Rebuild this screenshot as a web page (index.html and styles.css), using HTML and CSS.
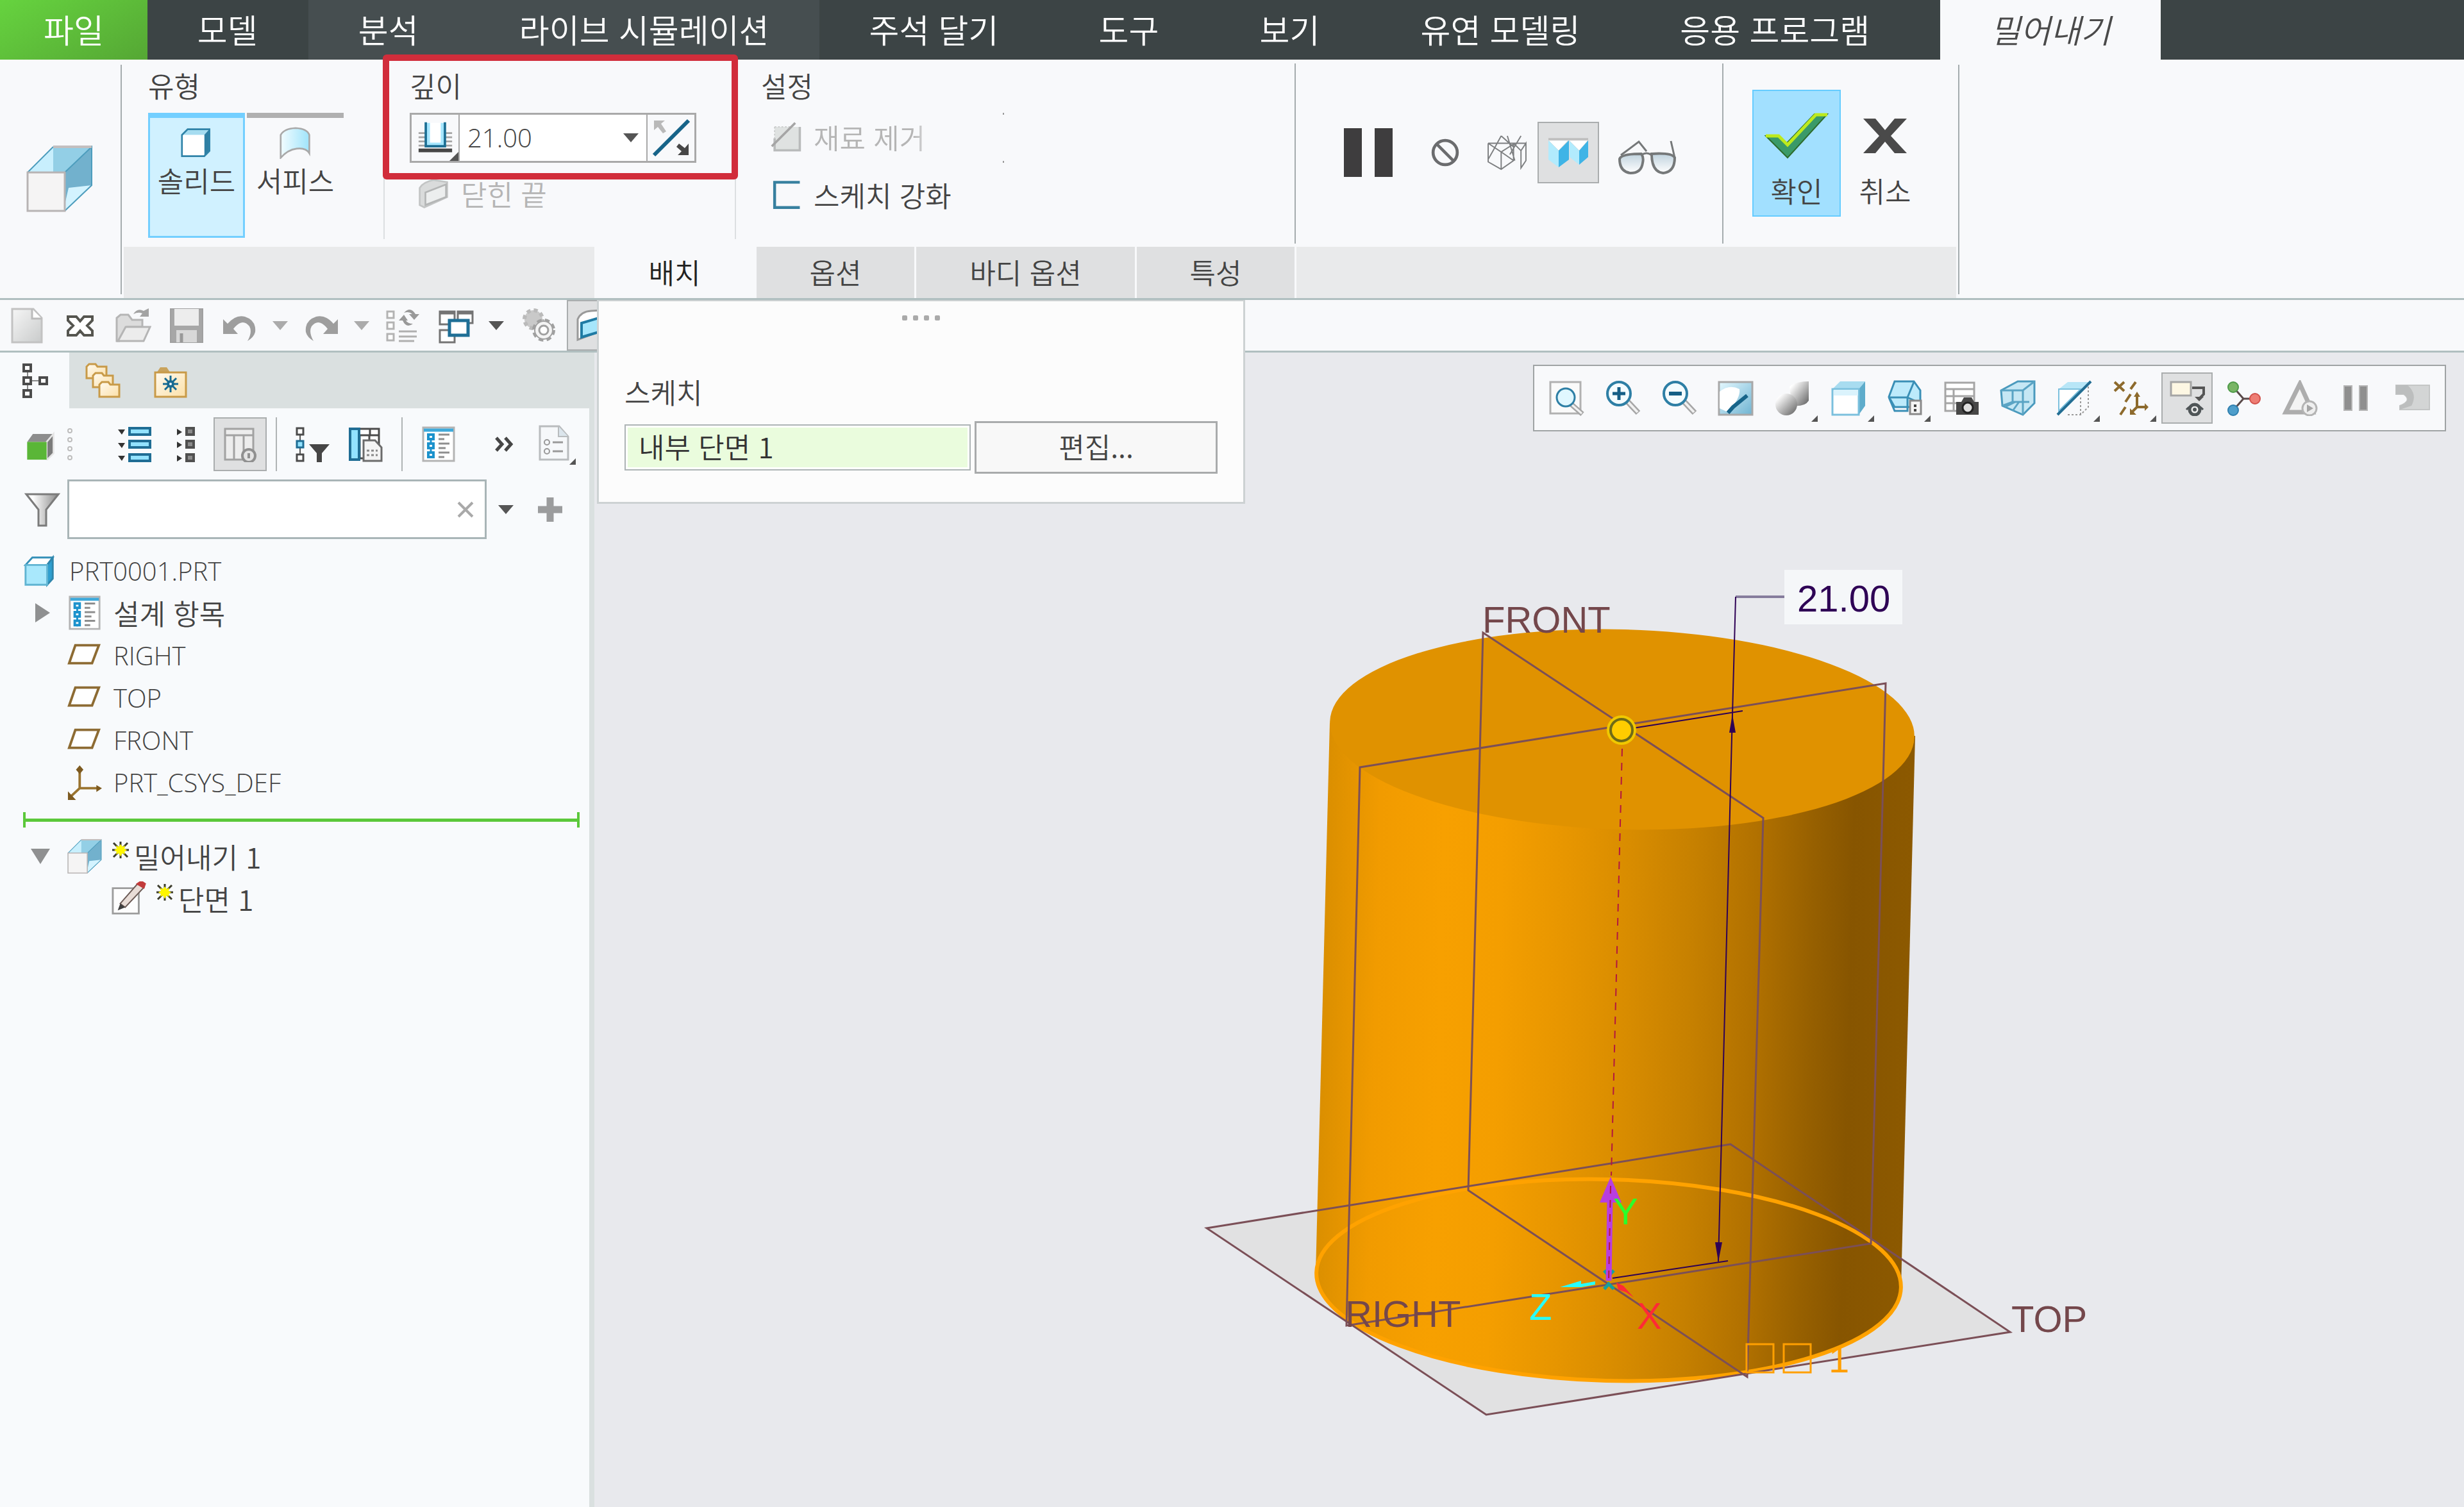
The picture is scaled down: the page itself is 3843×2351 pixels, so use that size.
FILE: index.html
```html
<!DOCTYPE html>
<html lang="ko">
<head>
<meta charset="utf-8">
<title>PRT0001 - 밀어내기</title>
<link rel="stylesheet" href="styles.css">
</head>
<body>
<svg class="sprite" aria-hidden="true">
  <defs>
    <linearGradient id="g-blue" x1="0" y1="0" x2="1" y2="1"><stop offset="0" stop-color="#e4f8ff"/><stop offset="1" stop-color="#6fb4d2"/></linearGradient>
    <linearGradient id="g-cyan" x1="0" y1="0" x2="1" y2="0"><stop offset="0" stop-color="#f2fcff"/><stop offset="1" stop-color="#9fe4fb"/></linearGradient>
    <linearGradient id="g-grey" x1="0" y1="0" x2="1" y2="1"><stop offset="0" stop-color="#f6f6f6"/><stop offset="1" stop-color="#c9cbcb"/></linearGradient>
    <linearGradient id="g-dark" x1="0" y1="0" x2="1" y2="1"><stop offset="0.15" stop-color="#ffffff"/><stop offset="1" stop-color="#5d5d5d"/></linearGradient>
    <linearGradient id="g-folder" x1="0" y1="0" x2="1" y2="1"><stop offset="0" stop-color="#fffaf0"/><stop offset="1" stop-color="#fbe0a8"/></linearGradient>
    <linearGradient id="g-lens" x1="0" y1="0" x2="0" y2="1"><stop offset="0" stop-color="#bfd2de"/><stop offset="1" stop-color="#ffffff"/></linearGradient>
    <linearGradient id="g-funnel" x1="0" y1="0" x2="1" y2="0"><stop offset="0.2" stop-color="#ffffff"/><stop offset="1" stop-color="#8a8a8a"/></linearGradient>
  </defs>
  <symbol id="i-extrude" viewBox="0 0 104 104">
    <path d="M2 42 42 2H102L60 42Z" fill="#c8effd"/><path d="M42 2H102L60 42H42Z" fill="#93cfe6"/>
    <path d="M60 42 102 2V62L60 102Z" fill="#72b1cd"/><path d="M60 102V92L66 66 102 62Z" fill="#d3f3ff"/>
    <path d="M2 42 42 2M60 42 102 2V62L60 102" fill="none" stroke="#4d9dbd" stroke-width="2"/>
    <path d="M42 2H102" stroke="#c3bfbf" stroke-width="4"/><path d="M2 42H60V102H2Z" fill="#f5f4f4" stroke="#b8b4b4" stroke-width="3"/>
  </symbol>
  <symbol id="i-solid" viewBox="0 0 56 56"><path d="M2 14 12 4H50L41 14Z" fill="#a6dcf0"/><path d="M41 14 50 4V42L41 51Z" fill="#2f7fa3"/><path d="M2 14H41V51H2Z" fill="#fff"/><path d="M2 14 12 4H50V42L41 51H2Z" fill="none" stroke="#2f83a8" stroke-width="3"/></symbol>
  <symbol id="i-surface" viewBox="0 0 56 56"><path d="M2 54V14Q8 3 28 2 48 3 52 14V46Q46 36 30 38 14 40 2 54Z" fill="url(#g-cyan)" stroke="#a9a9a9" stroke-width="3"/></symbol>
  <symbol id="i-depth" viewBox="0 0 60 56"><path d="M2 20H18M42 20H58M2 27H18M42 27H58M2 34H18M42 34H58M2 41H58" stroke="#a5a5a5" stroke-width="3"/><path d="M17 3V40H43V3" fill="#fff" stroke="#a6e6ff" stroke-width="8"/><path d="M14 2V42H46V2" fill="none" stroke="#1d6f94" stroke-width="4"/><path d="M2 49H58" stroke="#464646" stroke-width="6"/></symbol>
  <symbol id="i-flip" viewBox="0 0 60 60"><path d="M3 57 57 3" stroke="#176489" stroke-width="6"/><path d="M3 3H20L14 8 22 20 17 23 9 13 3 18Z" fill="#b9b9b9"/><path d="M57 57H40L46 51 38 44 42 39 51 46 57 39Z" fill="#474747"/></symbol>
  <symbol id="i-cap" viewBox="0 0 56 56"><path d="M4 18 Q10 8 28 4L52 8V34L12 52 4 48Z" fill="#d9dbdb" stroke="#c3c5c5" stroke-width="3"/><path d="M14 26 50 12V34L14 48Z" fill="#eceeee" stroke="#b4b6b6" stroke-width="3"/></symbol>
  <symbol id="i-remove" viewBox="0 0 56 56"><path d="M8 10H52V52H8Z" fill="#dfe2e1"/><path d="M52 10V51H8V30" fill="none" stroke="#b9bbbb" stroke-width="4"/><path d="M8 10H36M8 10V30" stroke="#c9cbcb" stroke-width="2" stroke-dasharray="3 3"/><path d="M3 44 44 3" stroke="#a5a5a5" stroke-width="4"/></symbol>
  <symbol id="i-thicken" viewBox="0 0 56 56"><path d="M52 6H8V50H52" fill="none" stroke="#37809f" stroke-width="5"/></symbol>
  <symbol id="i-pause" viewBox="0 0 76 76"><path d="M0 0H28V76H0ZM48 0H76V76H48Z" fill="#3e3d3e"/></symbol>
  <symbol id="i-none" viewBox="0 0 56 56"><circle cx="28" cy="28" r="24" fill="none" stroke="#6b6c6e" stroke-width="6"/><path d="M12 12 44 44" stroke="#6b6c6e" stroke-width="6"/></symbol>
  <symbol id="i-wire" viewBox="0 0 66 58"><path d="M3 14 24 28 46 14M24 28V56M3 14V44L24 56 44 42V14M44 14 56 26 64 14V42L56 54V26M3 14H64M24 2 12 24 3 40M24 2 44 20M34 2 46 42M56 2 38 32M24 28 44 42" fill="none" stroke="#7d7f81" stroke-width="2"/></symbol>
  <symbol id="i-shade" viewBox="0 0 66 46"><path d="M2 4H33L18 20ZM34 4H64L50 20Z" fill="#fff" stroke="#d5d5d5" stroke-width="1"/><path d="M2 4 18 20V46L2 34ZM35 5 50 20V42L35 30Z" fill="#b2ebfd"/><path d="M18 20 34 4V34L18 46ZM50 20 64 4V30L50 42Z" fill="#3fb4e6"/><path d="M2 2H64" stroke="#bcbcbc" stroke-width="3"/></symbol>
  <symbol id="i-glasses" viewBox="0 0 94 54"><path d="M4 30Q6 22 38 22Q42 28 40 36Q38 52 21 52Q4 50 4 30ZM54 22Q86 20 90 28Q90 50 72 52Q54 50 54 22Z" fill="url(#g-lens)" stroke="#757879" stroke-width="4"/><path d="M38 24Q46 18 54 24M6 24 34 3 46 18M90 28 84 2" fill="none" stroke="#757879" stroke-width="3"/></symbol>
  <symbol id="i-check" viewBox="0 0 100 72"><path d="M2 36H20L34 48 78 2H98L36 70Z" fill="#3a9a68" stroke="#2d6c2c" stroke-width="2"/><path d="M2 36H22L36 50 80 3H98" fill="none" stroke="#bdea1d" stroke-width="5"/></symbol>
  <symbol id="i-cross" viewBox="0 0 68 56"><path d="M0 1H19L34 19 49 1H68L43 28 68 55H49L34 37 19 55H0L25 28Z" fill="#4a4a4a"/></symbol>
  <symbol id="i-new" viewBox="0 0 56 56"><path d="M5 2H38L51 16V54H5Z" fill="url(#g-grey)" stroke="#c2c2c2" stroke-width="3"/><path d="M36 2V17H51" fill="#fff" stroke="#bbb" stroke-width="3"/></symbol>
  <symbol id="i-close" viewBox="0 0 56 56"><path d="M9 14H22L28 21 34 14H47V20L39 28 47 36V43H34L28 36 22 43H9V36L17 28 9 20Z" fill="#fff" stroke="#55554f" stroke-width="4"/></symbol>
  <symbol id="i-open" viewBox="0 0 56 56"><path d="M2 52V16L8 11H20L26 19H42V30H18L6 52Z" fill="#dcdcdc" stroke="#b5b5b5" stroke-width="3"/><path d="M16 30H54L44 52H4Z" fill="#ececec" stroke="#b5b5b5" stroke-width="3"/><path d="M28 10Q34 0 44 5L52 1V14H38L42 9Q36 6 28 10Z" fill="#a3a3a3"/></symbol>
  <symbol id="i-save" viewBox="0 0 56 56"><path d="M3 2H53V54H3Z" fill="#a7a7a7" stroke="#a0a0a0" stroke-width="2"/><path d="M9 2H47V28H9Z" fill="#ededed"/><path d="M12 35H44V54H12Z" fill="#d8d8d8"/><path d="M20 40V54" stroke="#999" stroke-width="5"/></symbol>
  <symbol id="i-undo" viewBox="0 0 56 56"><path d="M2 18 9 25Q22 10 36 14 54 20 52 38 50 46 40 52 48 38 43 29 32 15 18 33L25 41H2Z" fill="#9e9e9e"/></symbol>
  <symbol id="i-redo" viewBox="0 0 56 56"><path d="M54 18 47 25Q34 10 20 14 2 20 4 38 6 46 16 52 8 38 13 29 24 15 38 33L31 41H54Z" fill="#9e9e9e"/></symbol>
  <symbol id="i-caret" viewBox="0 0 24 16"><path d="M0 1H24L12 15Z" fill="currentColor"/></symbol>
  <symbol id="i-regen" viewBox="0 0 56 56"><path d="M4 6H14V16H4ZM4 23H14V33H4ZM4 41H14V51H4Z" fill="#fff" stroke="#b3b3b3" stroke-width="3"/><path d="M22 37H50M22 45H50M22 52H46" stroke="#b0b0b0" stroke-width="3"/><path d="M30 8Q40-3 48 10H54L46 19 38 10H43Q38 5 30 8ZM44 25Q34 33 28 20H22L30 11 36 20H33Q36 25 44 25Z" fill="#999"/></symbol>
  <symbol id="i-windows" viewBox="0 0 56 56"><path d="M3 6H26V26H3ZM31 6H54V24H31ZM3 35H26V54H3Z" fill="#fff" stroke="#747474" stroke-width="3"/><path d="M3 8H26M31 8H54" stroke="#747474" stroke-width="5"/><path d="M18 20H47V43H18Z" fill="#fff" stroke="#1f6f96" stroke-width="5"/></symbol>
  <symbol id="i-gear" viewBox="0 0 56 56"><circle cx="20" cy="18" r="14" fill="#c9c9c9" stroke="#bababa" stroke-width="6" stroke-dasharray="6 5"/><circle cx="36" cy="35" r="15" fill="#f0f0f0" stroke="#a0a0a0" stroke-width="6" stroke-dasharray="7 5"/><circle cx="36" cy="35" r="14" fill="#f4f4f4" stroke="#a0a0a0" stroke-width="2"/><circle cx="36" cy="35" r="7" fill="#fff" stroke="#a0a0a0" stroke-width="3"/></symbol>
  <symbol id="i-plane3d" viewBox="0 0 56 56"><path d="M3 50V18Q8 6 24 5L56 3V30Z" fill="#fff" stroke="#9a9a9a" stroke-width="3"/><path d="M9 46V24L56 10V32Z" fill="#a6e6fb" stroke="#1f7ba4" stroke-width="4"/></symbol>
  <symbol id="i-tree" viewBox="0 0 56 56"><path d="M17 12V22M17 34V44M24 28H36" stroke="#888" stroke-width="2"/><path d="M11 3H22V13H11ZM11 23H22V33H11ZM36 23H47V33H36ZM11 43H22V53H11Z" fill="#fff" stroke="#4b4b4b" stroke-width="4"/></symbol>
  <symbol id="i-folders" viewBox="0 0 56 56"><g fill="url(#g-folder)" stroke="#c89a48" stroke-width="3"><path d="M2 6 6 2H16L19 6H33V24H2Z"/><path d="M12 20 16 16H26L29 20H43V38H12Z"/><path d="M22 34 26 30H36L39 34H53V53H22Z"/></g></symbol>
  <symbol id="i-fav" viewBox="0 0 56 56"><path d="M6 16 12 7H22L28 16Z" fill="#c9a35c"/><path d="M4 15H52V53H4Z" fill="url(#g-folder)" stroke="#c89a48" stroke-width="3"/><path d="M28 20V46M16 33H40M19 24 37 42M37 24 19 42" stroke="#176a92" stroke-width="3"/><circle cx="28" cy="33" r="6" fill="#176a92"/><circle cx="28" cy="33" r="2" fill="#fff"/></symbol>
  <symbol id="i-cubegreen" viewBox="0 0 56 56"><path d="M6 24 16 10H52L40 24Z" fill="#8d8d8d"/><path d="M40 24 52 10V44L40 56Z" fill="#7b7b7b" stroke="#e5e5e5" stroke-width="3"/><path d="M6 24H40V55H6Z" fill="#5ab637"/></symbol>
  <symbol id="i-grip" viewBox="0 0 12 56"><g fill="#fff" stroke="#bdbdbd" stroke-width="2"><circle cx="6" cy="7" r="3"/><circle cx="6" cy="21" r="3"/><circle cx="6" cy="35" r="3"/><circle cx="6" cy="49" r="3"/></g></symbol>
  <symbol id="i-expand" viewBox="0 0 56 56"><path d="M3 5H14L9 13ZM3 26H14L9 34ZM3 46H14L9 54Z" fill="#333"/><path d="M21 3H53V13H21ZM21 23H53V33H21ZM21 44H53V54H21Z" fill="#92e2ff" stroke="#1f6d94" stroke-width="4"/></symbol>
  <symbol id="i-collapse" viewBox="0 0 56 56"><path d="M12 4V14L20 9ZM12 24V34L20 29ZM12 45V55L20 50Z" fill="#333"/><path d="M27 3H38V13H27ZM27 23H38V33H27ZM27 44H38V54H27Z" fill="#8b8b8b" stroke="#505050" stroke-width="4"/></symbol>
  <symbol id="i-columns" viewBox="0 0 56 56"><path d="M4 4H48V14H4ZM4 14H18V52H4ZM18 14H33V52H18ZM33 14H48V44H33Z" fill="#ededed" stroke="#a2a2a2" stroke-width="3"/><circle cx="41" cy="46" r="10" fill="#e4e4e4" stroke="#909090" stroke-width="4"/><path d="M41 42V50" stroke="#909090" stroke-width="4"/></symbol>
  <symbol id="i-treefilter" viewBox="0 0 56 56"><path d="M8 13V44" stroke="#555" stroke-width="2"/><path d="M3 3H13V13H3ZM3 44H13V54H3Z" fill="#fff" stroke="#4b4b4b" stroke-width="3"/><path d="M3 23H13V33H3Z" fill="#92e2ff" stroke="#1f6d94" stroke-width="3"/><path d="M22 28H54L42 42V56H34V42Z" fill="#464646"/></symbol>
  <symbol id="i-treecols" viewBox="0 0 56 56"><path d="M4 4H48V14H4ZM18 14H33V50H18ZM33 14H48V44H33ZM34 4V14" fill="#fff" stroke="#4b4b4b" stroke-width="3"/><path d="M3 4H17V52H3Z" fill="#92e2ff" stroke="#1f6d94" stroke-width="4"/><path d="M24 22H42L52 33V54H24Z" fill="#f4f4f4" stroke="#6b6b6b" stroke-width="3"/><path d="M29 38H46M29 45H46" stroke="#888" stroke-width="3" stroke-dasharray="4 3"/></symbol>
  <symbol id="i-list" viewBox="0 0 56 56"><path d="M4 2H52V54H4Z" fill="#fff" stroke="#b4b4b4" stroke-width="3"/><path d="M5 6H51" stroke="#3ea9da" stroke-width="5"/><path d="M16 14V50" stroke="#1c92cc" stroke-width="3"/><path d="M12 13H20V20H12ZM12 27H20V34H12ZM12 41H20V48H12Z" fill="#fff" stroke="#1c92cc" stroke-width="4"/><path d="M28 13H45M28 20H37M28 27H45M28 34H39M28 41H45M28 48H37" stroke="#8e8e8e" stroke-width="3"/></symbol>
  <symbol id="i-more" viewBox="0 0 56 56"><path d="M15 18 24 28 15 38M29 18 38 28 29 38" fill="none" stroke="#464646" stroke-width="5"/></symbol>
  <symbol id="i-doc" viewBox="0 0 60 64"><path d="M2 4H32L46 20V56H2Z" fill="#f6f8fa" stroke="#b9bcbe" stroke-width="3"/><path d="M31 4V20H46" fill="#dbe5ec" stroke="#b9bcbe" stroke-width="2"/><circle cx="13" cy="29" r="4" fill="none" stroke="#999" stroke-width="2"/><circle cx="13" cy="43" r="4" fill="none" stroke="#999" stroke-width="2"/><path d="M22 29H38M22 43H38" stroke="#999" stroke-width="3"/><path d="M58 54V64H48Z" fill="#555"/></symbol>
  <symbol id="i-funnel" viewBox="0 0 56 56"><path d="M3 4H53L34 28V53H22V28Z" fill="url(#g-funnel)" stroke="#7b7b7b" stroke-width="3"/></symbol>
  <symbol id="i-x" viewBox="0 0 26 26"><path d="M2 2 24 24M24 2 2 24" stroke="#a9a9a9" stroke-width="4"/></symbol>
  <symbol id="i-plus" viewBox="0 0 40 40"><path d="M20 1V39M1 20H39" stroke="#9b9c9d" stroke-width="11"/></symbol>
  <symbol id="i-part" viewBox="0 0 56 56"><path d="M4 18 15 6H48L39 18Z" fill="#fff" stroke="#3490b8" stroke-width="3"/><path d="M39 18 48 6V40L39 50Z" fill="#2f9fd0" stroke="#2f86ac" stroke-width="3"/><path d="M4 18H39V50H4Z" fill="#a9e8fc" stroke="#60b4d2" stroke-width="3"/></symbol>
  <symbol id="i-plane" viewBox="0 0 56 56"><path d="M13 11H51L40 40H3Z" fill="#fff" stroke="#8d6b33" stroke-width="4"/></symbol>
  <symbol id="i-csys" viewBox="0 0 56 56"><path d="M20 5V37H52M20 37 5 51" fill="none" stroke="#9a7430" stroke-width="4"/><path d="M20 0 26 7 20 14 14 7ZM47 32 56 37 47 43ZM1 42V56H14Z" fill="#7d5a20"/></symbol>
  <symbol id="i-star" viewBox="0 0 26 26"><path d="M13 0V26M0 13H26M2 2 24 24M24 2 2 24" stroke="#3c3c2c" stroke-width="3"/><path d="M13 4 16 8 20 6 19 11 23 13 19 16 20 20 16 18 13 23 10 18 6 20 7 16 3 13 7 11 6 6 10 8Z" fill="#fff700"/></symbol>
  <symbol id="i-sketch" viewBox="0 0 56 56"><path d="M2 11H44V52H2Z" fill="#fdfdfd" stroke="#9c9c9c" stroke-width="3"/><path d="M14 36 42 4 52 10 22 42Z" fill="#e8dcd6" stroke="#6b5a55" stroke-width="2"/><path d="M42 4 48 0 54 4 52 10Z" fill="#c23b3b" stroke="#c23b3b" stroke-width="3"/><path d="M14 36 22 42 10 47Z" fill="#3f3f3f"/></symbol>
  <symbol id="i-lens" viewBox="0 0 56 56"><path d="M36 34 52 51" stroke="#a6a6a6" stroke-width="9"/><path d="M36 34 51 50" stroke="#f1f1f1" stroke-width="4"/><circle cx="22" cy="21" r="18" fill="#f4fcff" stroke="#2e7fa5" stroke-width="4"/></symbol>
  <symbol id="i-fit" viewBox="0 0 56 56"><path d="M3 3H50V52H3Z" fill="#fafafa" stroke="#b1b1b1" stroke-width="3"/><path d="M36 38 53 53" stroke="#a6a6a6" stroke-width="8"/><path d="M36 38 52 52" stroke="#f1f1f1" stroke-width="3"/><circle cx="27" cy="27" r="14" fill="#e0f7ff" stroke="#2e7fa5" stroke-width="3"/></symbol>
  <symbol id="i-repaint" viewBox="0 0 56 56"><path d="M2 3H54V54H2Z" fill="url(#g-blue)" stroke="#a8a8a8" stroke-width="3"/><path d="M3 44V18Q18 6 34 14 36 28 16 50Z" fill="#fff"/><path d="M46 24 24 42 16 51" fill="none" stroke="#176489" stroke-width="6"/></symbol>
  <symbol id="i-shading" viewBox="0 0 56 56"><path d="M24 10Q34 2 54 2V32Q48 42 28 40Z" fill="url(#g-dark)"/><circle cx="19" cy="38" r="17" fill="url(#g-dark)"/></symbol>
  <symbol id="i-display" viewBox="0 0 56 56"><path d="M3 14 15 2H54L44 14Z" fill="#a8dcf0"/><path d="M44 14 54 2V40L44 54Z" fill="#5eaccb"/><path d="M3 14H44V54H3Z" fill="#fff" stroke="#7bc0dd" stroke-width="3"/><path d="M5 15H43V24H5Z" fill="#dbf3fc"/></symbol>
  <symbol id="i-saved" viewBox="0 0 56 56"><path d="M12 2H42L52 16V42H12L3 26Z" fill="#bdeafb" stroke="#3a8fb6" stroke-width="3"/><path d="M3 27H32L42 3M32 27V48H12L3 27M32 27 52 36" fill="none" stroke="#3a8fb6" stroke-width="3"/><path d="M36 32H53V53H36Z" fill="#f5f5f5" stroke="#8a8a8a" stroke-width="3"/><path d="M44 38V42M44 45V49" stroke="#444" stroke-width="4"/></symbol>
  <symbol id="i-camera" viewBox="0 0 56 56"><path d="M3 4H48V48H3ZM3 14H48M3 25H48M3 36H48M16 14V48" fill="#fff" stroke="#a5a5a5" stroke-width="3"/><path d="M20 34H28L32 27H44L48 34H55V54H20Z" fill="#474747"/><circle cx="38" cy="43" r="8" fill="#ddd" stroke="#222" stroke-width="3"/></symbol>
  <symbol id="i-persp" viewBox="0 0 56 56"><path d="M2 16 28 2H54V36L36 54 4 40Z" fill="#c5e7f4" stroke="#4a9abd" stroke-width="3"/><path d="M2 16H36L54 2M36 16V54M4 40 20 34H46M20 34V16M8 42 24 34M20 48 30 34" fill="none" stroke="#5aa4c4" stroke-width="3"/></symbol>
  <symbol id="i-section" viewBox="0 0 56 56"><path d="M4 14 18 3H52L4 50Z" fill="#b8e6f7"/><path d="M4 14H38L4 48Z" fill="#fff" stroke="#7bc0dd" stroke-width="2"/><path d="M18 54H38L50 42V10M38 54V26" fill="none" stroke="#9a9a9a" stroke-width="2" stroke-dasharray="3 3"/><path d="M2 54 54 2" stroke="#236e93" stroke-width="4"/></symbol>
  <symbol id="i-datum" viewBox="0 0 56 56"><path d="M3 3 18 17M18 3 3 17M36 3 28 14M28 22 20 34M20 42 12 54M38 24V42H54M38 42 30 50" fill="none" stroke="#8d6a2c" stroke-width="4"/><path d="M33 26 38 18 43 26ZM50 36 56 42 50 48ZM27 44V54H37Z" fill="#8d6a2c"/></symbol>
  <symbol id="i-annot" viewBox="0 0 56 56"><path d="M3 3H34V24H3Z" fill="#fdf7e3" stroke="#a5a5a5" stroke-width="3"/><path d="M36 12H54V22L48 28" fill="none" stroke="#555" stroke-width="4"/><path d="M40 26H54L47 33Z" fill="#555"/><circle cx="40" cy="46" r="8" fill="#eee" stroke="#4f5557" stroke-width="5"/><path d="M27 46Q40 32 53 46" fill="none" stroke="#4f5557" stroke-width="3"/><circle cx="40" cy="46" r="3" fill="#4f5557"/></symbol>
  <symbol id="i-spin" viewBox="0 0 56 56"><path d="M13 12 28 29 13 46M28 29H46" fill="none" stroke="#5a4a4a" stroke-width="3"/><circle cx="12" cy="11" r="8" fill="#79b565" stroke="#4e9a48" stroke-width="2"/><circle cx="46" cy="29" r="8" fill="#ee7d74" stroke="#d2524c" stroke-width="2"/><circle cx="12" cy="47" r="8" fill="#4e9ecb" stroke="#2f7fae" stroke-width="2"/></symbol>
  <symbol id="i-analysis" viewBox="0 0 56 56"><path d="M28 6 48 50H6Z" fill="#f3f3f3" stroke="#adadad" stroke-width="7"/><circle cx="43" cy="44" r="11" fill="#efefef" stroke="#b4b4b4" stroke-width="3"/><path d="M39 38V50L49 44Z" fill="#a5a5a5"/></symbol>
  <symbol id="i-pausesmall" viewBox="0 0 56 56"><path d="M9 9H21V47H9ZM33 9H45V47H33Z" fill="#8f8f8f" stroke="#b5b5b5" stroke-width="2"/></symbol>
  <symbol id="i-fold" viewBox="0 0 56 56"><path d="M2 8H54V46H8V40Q28 32 14 22H2Z" fill="#d3d5d5" stroke="#c4c6c6" stroke-width="2"/><path d="M2 8H20Q36 22 26 40L8 46V40Q28 32 14 22H2Z" fill="#bcbebe"/></symbol>
</svg>

<nav class="tabs">
  <a class="tab tab--file" href="#">파일</a>
  <a class="tab" href="#">모델</a>
  <a class="tab tab--soft" href="#">분석</a>
  <a class="tab tab--soft" href="#">라이브 시뮬레이션</a>
  <a class="tab" href="#">주석 달기</a>
  <a class="tab" href="#">도구</a>
  <a class="tab" href="#">보기</a>
  <a class="tab" href="#">유연 모델링</a>
  <a class="tab" href="#">응용 프로그램</a>
  <a class="tab tab--active" href="#">밀어내기</a>
</nav>

<header class="ribbon">
  <div class="ribbon-feature"><svg class="i-104"><use href="#i-extrude"/></svg></div>
  <div class="ribbon-main">
    <div class="groups">
      <section class="group group--type">
        <h2 class="group-title">유형</h2>
        <div class="type-row">
          <button class="type-btn type-btn--on"><svg class="i-50"><use href="#i-solid"/></svg>솔리드</button>
          <button class="type-btn"><svg class="i-50"><use href="#i-surface"/></svg>서피스</button>
        </div>
      </section>
      <section class="group group--depth">
        <h2 class="group-title">깊이</h2>
        <div class="combo">
          <button class="combo-btn combo-btn--menu" aria-label="깊이 옵션"><svg class="i-56"><use href="#i-depth"/></svg></button>
          <input class="combo-input" aria-label="깊이" value="21.00">
          <button class="combo-caret" aria-label="값 목록"><svg class="caret"><use href="#i-caret"/></svg></button>
          <button class="combo-btn" aria-label="방향 전환"><svg class="i-60"><use href="#i-flip"/></svg></button>
        </div>
        <button class="line-btn line-btn--cap" disabled><svg class="i-50"><use href="#i-cap"/></svg>닫힌 끝</button>
        <div class="highlight"></div>
      </section>
      <section class="group group--settings">
        <h2 class="group-title">설정</h2>
        <button class="line-btn line-btn--remove" disabled><svg class="i-50"><use href="#i-remove"/></svg><span class="fade">재료 제거</span></button>
        <button class="line-btn line-btn--thicken"><svg class="i-50"><use href="#i-thicken"/></svg>스케치 강화</button>
      </section>
      <section class="group group--preview">
        <button class="pause-btn" aria-label="일시 중지"><svg class="i-76"><use href="#i-pause"/></svg></button>
        <button class="view-btn" aria-label="미리 보기 없음"><svg class="i-44"><use href="#i-none"/></svg></button>
        <button class="view-btn" aria-label="와이어프레임"><svg class="i-66"><use href="#i-wire"/></svg></button>
        <button class="view-btn view-btn--on" aria-label="셰이딩"><svg class="i-66"><use href="#i-shade"/></svg></button>
        <button class="view-btn view-btn--wide" aria-label="검증"><svg class="i-94"><use href="#i-glasses"/></svg></button>
      </section>
      <section class="group group--confirm">
        <button class="confirm-btn confirm-btn--ok"><svg class="i-100"><use href="#i-check"/></svg>확인</button>
        <button class="confirm-btn"><svg class="i-68"><use href="#i-cross"/></svg>취소</button>
      </section>
    </div>
    <nav class="subtabs">
      <a class="subtab subtab--on" href="#">배치</a>
      <a class="subtab" href="#">옵션</a>
      <a class="subtab subtab--wide" href="#">바디 옵션</a>
      <a class="subtab" href="#">특성</a>
    </nav>
  </div>
</header>

<div class="quickbar">
  <button class="q" aria-label="새로 만들기"><svg class="i-56"><use href="#i-new"/></svg></button>
  <button class="q" aria-label="닫기"><svg class="i-56"><use href="#i-close"/></svg></button>
  <button class="q" aria-label="열기"><svg class="i-56"><use href="#i-open"/></svg></button>
  <button class="q" aria-label="저장"><svg class="i-56"><use href="#i-save"/></svg></button>
  <button class="q" aria-label="실행 취소"><svg class="i-56"><use href="#i-undo"/></svg></button>
  <button class="q q--caret q--off" aria-label="실행 취소 목록"><svg class="caret"><use href="#i-caret"/></svg></button>
  <button class="q" aria-label="다시 실행"><svg class="i-56"><use href="#i-redo"/></svg></button>
  <button class="q q--caret q--off" aria-label="다시 실행 목록"><svg class="caret"><use href="#i-caret"/></svg></button>
  <button class="q" aria-label="재생성"><svg class="i-56"><use href="#i-regen"/></svg></button>
  <button class="q" aria-label="창"><svg class="i-56"><use href="#i-windows"/></svg></button>
  <button class="q q--caret" aria-label="창 목록"><svg class="caret"><use href="#i-caret"/></svg></button>
  <button class="q q--gear" aria-label="설정"><svg class="i-56"><use href="#i-gear"/></svg></button>
  <button class="q q--on" aria-label="평면 표시"><svg class="i-56"><use href="#i-plane3d"/></svg></button>

  <section class="popup">
    <div class="popup-grip"><i></i><i></i><i></i><i></i></div>
    <label class="popup-label" for="sketch">스케치</label>
    <div class="popup-row">
      <input class="collector" id="sketch" value="내부 단면 1" readonly>
      <button class="edit-btn">편집...</button>
    </div>
  </section>
</div>

<div class="workspace">
  <aside class="sidebar">
    <div class="side-tabs">
      <button class="side-tab side-tab--on" aria-label="모델 트리"><svg class="i-56"><use href="#i-tree"/></svg></button>
      <button class="side-tab" aria-label="폴더"><svg class="i-56"><use href="#i-folders"/></svg></button>
      <button class="side-tab" aria-label="즐겨찾기"><svg class="i-56"><use href="#i-fav"/></svg></button>
    </div>
    <div class="side-tools">
      <button class="q" aria-label="모델"><svg class="i-50"><use href="#i-cubegreen"/></svg></button>
      <svg class="grip"><use href="#i-grip"/></svg>
      <button class="q q--after-grip" aria-label="모두 확장"><svg class="i-56"><use href="#i-expand"/></svg></button>
      <button class="q" aria-label="모두 축소"><svg class="i-56"><use href="#i-collapse"/></svg></button>
      <button class="q q--on" aria-label="열 표시"><svg class="i-56"><use href="#i-columns"/></svg></button>
      <span class="rule"></span>
      <button class="q" aria-label="트리 필터"><svg class="i-56"><use href="#i-treefilter"/></svg></button>
      <button class="q" aria-label="트리 열"><svg class="i-56"><use href="#i-treecols"/></svg></button>
      <span class="rule"></span>
      <button class="q" aria-label="설계 항목"><svg class="i-56"><use href="#i-list"/></svg></button>
      <button class="q q--more" aria-label="더 보기"><svg class="i-56"><use href="#i-more"/></svg></button>
      <button class="q" aria-label="설정"><svg class="i-doc"><use href="#i-doc"/></svg></button>
    </div>
    <div class="filter">
      <svg class="i-56"><use href="#i-funnel"/></svg>
      <div class="filter-box"><input class="filter-input" aria-label="필터"><svg class="i-26"><use href="#i-x"/></svg></div>
      <button class="q q--caret" aria-label="필터 목록"><svg class="caret"><use href="#i-caret"/></svg></button>
      <button class="q q--add" aria-label="추가"><svg class="i-40"><use href="#i-plus"/></svg></button>
    </div>
    <ul class="tree">
      <li class="node node--root latin"><svg class="i-54"><use href="#i-part"/></svg>PRT0001.PRT</li>
      <li class="node"><span class="twist twist--closed"></span><svg class="i-54"><use href="#i-list"/></svg>설계 항목</li>
      <li class="node latin"><span class="twist"></span><svg class="i-54"><use href="#i-plane"/></svg>RIGHT</li>
      <li class="node latin"><span class="twist"></span><svg class="i-54"><use href="#i-plane"/></svg>TOP</li>
      <li class="node latin"><span class="twist"></span><svg class="i-54"><use href="#i-plane"/></svg>FRONT</li>
      <li class="node latin"><span class="twist"></span><svg class="i-54"><use href="#i-csys"/></svg>PRT_CSYS_DEF</li>
      <li class="insert"><span class="insert-bar"></span></li>
      <li class="node"><span class="twist twist--open"></span><svg class="i-54"><use href="#i-extrude"/></svg><svg class="star"><use href="#i-star"/></svg>밀어내기 1</li>
      <li class="node node--child"><svg class="i-54"><use href="#i-sketch"/></svg><svg class="star"><use href="#i-star"/></svg>단면 1</li>
    </ul>
  </aside>

  <main class="stage">
    <svg class="model" viewBox="927 550 2916 1801" role="img" aria-label="밀어내기 모델">
      <defs>
        <linearGradient id="side" gradientUnits="userSpaceOnUse" x1="2063" y1="1557" x2="2976" y2="1580">
          <stop offset="0" stop-color="#db8f00"/><stop offset="0.09" stop-color="#f19b00"/><stop offset="0.2" stop-color="#f7a000"/><stop offset="0.3" stop-color="#f49e00"/><stop offset="0.42" stop-color="#e69500"/><stop offset="0.52" stop-color="#d88c00"/><stop offset="0.63" stop-color="#c68000"/><stop offset="0.74" stop-color="#b07000"/><stop offset="0.83" stop-color="#976000"/><stop offset="0.9" stop-color="#875500"/><stop offset="1" stop-color="#8c5900"/>
        </linearGradient>
      </defs>
      <path d="M1882 1916 2699 1785 3135 2078 2318 2207Z" fill="#e1e1e2"/>
      <path d="M2074 1128 2052 1986A457 158 1.5 0 0 2965 2008L2987 1148Z" fill="url(#side)"/>
      <ellipse cx="2530" cy="1138" rx="456" ry="156" transform="rotate(1.5 2530 1138)" fill="#e09200"/>
      <ellipse cx="2509" cy="1997" rx="456" ry="157" transform="rotate(1.5 2509 1997)" fill="url(#side)"/>
      <ellipse cx="2509" cy="1997" rx="456" ry="157" transform="rotate(1.5 2509 1997)" fill="none" stroke="#ffa200" stroke-width="6"/>
      <g fill="none" stroke="#7b4f57" stroke-width="3">
        <path d="M1882 1916 2699 1785 3135 2078 2318 2207Z"/>
        <path d="M2121 1197 2941 1066 2918 1940 2100 2068Z"/>
        <path d="M2313 987 2750 1276 2725 2148 2290 1857Z"/>
      </g>
      <g class="cad-text" fill="#74474b">
        <text x="2312" y="987">FRONT</text><text x="2098" y="2070">RIGHT</text><text x="3137" y="2078">TOP</text>
      </g>
      <g fill="none" stroke="#2e0055" stroke-width="2">
        <path d="M2783 931H2707" stroke="#857c9c" stroke-width="4"/><path d="M2707 931 2701 1150 2680 1968M2547 1136 2718 1109M2515 1994 2695 1967"/>
      </g>
      <path d="M2702 1115 2707 1143H2697ZM2680 1968 2675 1938H2686Z" fill="#2e0055"/>
      <path d="M2783 889H2967V974H2783Z" fill="#f5f7f9"/>
      <text class="cad-text" x="2803" y="954" fill="#2e0055">21.00</text>
      <path d="M2530 1168 2513 1834" stroke="#b3173f" stroke-width="2" stroke-dasharray="12 10"/>
      <circle cx="2529" cy="1139" r="20" fill="#ffcc00" stroke="#f0c800" stroke-width="6"/><circle cx="2529" cy="1139" r="17" fill="#ffcc00" stroke="#6f6b17" stroke-width="4"/>
      <path d="M2502 1982 2509 1990 2517 1982M2502 2011 2509 2003 2517 2011" fill="none" stroke="#15a0a0" stroke-width="5"/>
      <path d="M2511 1868 2509 1998" stroke="#b83ee0" stroke-width="9"/><path d="M2512 1836 2529 1876H2495Z" fill="#b83ee0"/>
      <path d="M2512 1850 2509 1998" stroke="#b3173f" stroke-width="2" stroke-dasharray="12 10"/>
      <path d="M2433 2008 2466 1998V2003L2488 1999V2004L2466 2008Z" fill="#28ffff"/><path d="M2521 2001 2532 2006 2548 2024 2536 2016 2524 2012Z" fill="#ff2a36"/>
      <text class="cad-text" x="2516" y="1910" fill="#2bff2b">Y</text><text class="cad-text" x="2385" y="2059" fill="#28ffff">Z</text><text class="cad-text" x="2553" y="2073" fill="#ff2a36">X</text>
      <path d="M2724 2097H2766V2141H2724ZM2782 2097H2824V2141H2782Z" fill="none" stroke="#ff9f00" stroke-width="3"/>
      <text class="cad-text" x="2852" y="2141" fill="#ff9f00">1</text>
    </svg>
    <div class="viewbar">
      <button class="v" aria-label="다시 맞춤"><svg class="i-56"><use href="#i-fit"/></svg></button>
      <button class="v" aria-label="확대"><svg class="i-56" viewBox="0 0 56 56"><use href="#i-lens"/><path d="M12 21H32M22 11V31" stroke="#155f86" stroke-width="5"/></svg></button>
      <button class="v" aria-label="축소"><svg class="i-56" viewBox="0 0 56 56"><use href="#i-lens"/><path d="M12 21H32" stroke="#155f86" stroke-width="6"/></svg></button>
      <button class="v" aria-label="다시 그리기"><svg class="i-56"><use href="#i-repaint"/></svg></button>
      <button class="v v--menu" aria-label="렌더링"><svg class="i-56"><use href="#i-shading"/></svg></button>
      <button class="v v--menu" aria-label="표시 스타일"><svg class="i-56"><use href="#i-display"/></svg></button>
      <button class="v v--menu" aria-label="저장된 방향"><svg class="i-56"><use href="#i-saved"/></svg></button>
      <button class="v" aria-label="뷰 관리자"><svg class="i-56"><use href="#i-camera"/></svg></button>
      <button class="v" aria-label="원근"><svg class="i-56"><use href="#i-persp"/></svg></button>
      <button class="v v--menu" aria-label="단면"><svg class="i-56"><use href="#i-section"/></svg></button>
      <button class="v v--menu" aria-label="데이텀 표시"><svg class="i-56"><use href="#i-datum"/></svg></button>
      <button class="v v--on" aria-label="주석 표시"><svg class="i-56"><use href="#i-annot"/></svg></button>
      <button class="v" aria-label="회전 중심"><svg class="i-56"><use href="#i-spin"/></svg></button>
      <button class="v" aria-label="시뮬레이션"><svg class="i-56"><use href="#i-analysis"/></svg></button>
      <button class="v" aria-label="일시 중지"><svg class="i-56"><use href="#i-pausesmall"/></svg></button>
      <button class="v" aria-label="결과"><svg class="i-56"><use href="#i-fold"/></svg></button>
    </div>
  </main>
</div>
</body>
</html>
```

FILE: styles.css
```css
* { box-sizing: border-box; }
html, body { margin: 0; }
body {
  min-height: 100vh;
  display: flex;
  flex-direction: column;
  background: #e8e9ed;
  color: #444;
  font-family: "Noto Sans CJK KR", "Noto Sans", sans-serif;
  font-size: 44px;
  font-weight: 350;
  line-height: 44px;
}
button, input { font: inherit; color: inherit; padding: 0; margin: 0; border: 0; background: none; border-radius: 0; }
button { display: flex; align-items: center; justify-content: center; }
svg { flex: none; display: block; }
.sprite { position: absolute; width: 0; height: 0; }

.i-26 { width: 26px; height: 26px; }
.i-40 { width: 40px; height: 40px; }
.i-44 { width: 44px; height: 44px; }
.i-50 { width: 50px; height: 50px; }
.i-54 { width: 54px; height: 54px; }
.i-56 { width: 56px; height: 56px; }
.i-60 { width: 60px; height: 60px; }
.i-doc { width: 60px; height: 64px; }
.i-66 { width: 66px; height: 56px; }
.i-68 { width: 68px; height: 56px; }
.i-76 { width: 76px; height: 76px; }
.i-94 { width: 94px; height: 54px; }
.i-100 { width: 100px; height: 72px; }
.i-104 { width: 104px; height: 104px; }
.caret { width: 24px; height: 16px; }

/* application tabs */
.tabs { display: flex; height: 93px; background: #3c4445; }
.tab {
  display: flex; align-items: center;
  min-width: 251px; padding: 0 78px 2px;
  color: #fff; text-decoration: none; white-space: nowrap;
  font-size: 51px; line-height: 51px;
}
.tab--file { min-width: 0; padding: 0 68px 2px; background: linear-gradient(150deg, #66d33f, #55a734); }
.tab--soft { background: #464e50; }
.tab--active { margin-left: 32px; background: #f8f9fb; color: #4a4a4a; font-style: italic; }

/* ribbon */
.ribbon { display: flex; height: 375px; background: #f8f9fb; border-bottom: 3px solid #b0bfc0; }
.ribbon-feature { width: 190px; margin: 8px 3px 6px 0; padding: 126px 0 0 41px; border-right: 2px solid #a5acae; }
.ribbon-main { display: flex; flex-direction: column; width: 2863px; position: relative; }
.ribbon-main::after { content: ""; position: absolute; right: 0; top: 8px; bottom: 6px; width: 2px; background: #a5acae; }
.groups { display: flex; flex: 1; padding-top: 6px; }
.group { padding: 12px 0 0 39px; margin-bottom: 5px; border-right: 2px solid #a5acae; }
.group-title { margin: 0 0 21px; font: inherit; line-height: 44px; }
.group--type { width: 407px; padding-left: 38px; margin-bottom: 12px; border-color: #dcdfe1; }
.group--depth { width: 548px; margin-bottom: 12px; border-color: #dcdfe1; position: relative; }
.group--settings { flex: 1; }
.group--preview { width: 667px; display: flex; align-items: center; padding: 0 0 4px 75px; }
.group--confirm { width: 368px; display: flex; align-items: flex-start; padding: 41px 0 0 45px; border: 0; }

.type-row { display: flex; gap: 3px; }
.type-btn {
  width: 151px; height: 195px;
  flex-direction: column; justify-content: flex-start; gap: 11px;
  padding-top: 14px;
  border-top: 8px solid #b0b0b0;
  white-space: nowrap;
}
.type-btn--on { background: #d0f1ff; border: 3px solid #73cfff; border-top-width: 8px; }

.combo { display: flex; width: 447px; height: 78px; border: 3px solid #a9a9a9; background: #fff; }
.combo-btn { position: relative; width: 75px; background: #f8f9fb; border-left: 2px solid #a9a9a9; }
.combo-btn--menu { border-left: 0; border-right: 2px solid #a9a9a9; }
.combo-btn--menu::after, .v--menu::after {
  content: ""; position: absolute; right: 0; bottom: 0;
  border: 7px solid transparent; border-right-color: #555; border-bottom-color: #555;
}
.combo-input { flex: 1; min-width: 0; padding-left: 12px; font-family: "Open Sans", "Noto Sans", sans-serif; font-size: 40px; font-weight: 300; }
.combo-caret { width: 48px; color: #555; }
.line-btn { gap: 18px; justify-content: flex-start; white-space: nowrap; height: 78px; padding-bottom: 2px; }
.line-btn:disabled { color: #b5b5b5; }
.line-btn--cap { margin: 10px 0 0 12px; }
.line-btn--remove { width: 379px; padding-left: 14px; background: linear-gradient(#999, #999) right top / 2px 3px no-repeat, linear-gradient(#999, #999) right bottom / 2px 3px no-repeat; }
.line-btn--thicken { margin-top: 12px; padding-left: 14px; }
.fade { -webkit-mask-image: linear-gradient(90deg, #000 90%, transparent 110%); mask-image: linear-gradient(90deg, #000 90%, transparent 110%); }
.highlight { position: absolute; left: -3px; top: -14px; width: 554px; height: 195px; border: 10px solid #d12d3b; border-radius: 6px; z-index: 2; }

.pause-btn { margin-right: 34px; }
.view-btn { width: 96px; height: 96px; }
.view-btn--on { background: #dfe0e1; border: 2px solid #aaadae; }
.view-btn--wide { width: 150px; padding-top: 14px; }
.confirm-btn { width: 138px; height: 198px; flex-direction: column; justify-content: flex-start; gap: 35px; padding-top: 44px; }
.confirm-btn--ok { gap: 27px; padding-top: 34px; background: #a2e0ff; border: 2px solid #66ccff; }

.subtabs { display: flex; gap: 3px; height: 80px; padding-left: 734px; margin-right: 5px; background: #e9eaeb; }
.subtab { width: 246px; display: flex; align-items: center; justify-content: center; padding-bottom: 2px; background: #dfe0e1; box-shadow: 3px 0 #f8f9fb; color: inherit; text-decoration: none; white-space: nowrap; }
.subtab--on { width: 250px; background: #f8f9fb; color: #222; }
.subtab--wide { width: 341px; }

/* quick access bar */
.quickbar { position: relative; display: flex; height: 82px; background: #f8f9fb; border-bottom: 3px solid #b0bfc0; }
.q { width: 83px; flex: none; color: #555; }
.q--caret { width: 44px; }
.q--gear { width: 88px; }
.q--off { color: #ababab; }
.q--on { background: #dfe0e1; border: 2px solid #aaadae; }

.popup {
  position: absolute; z-index: 3; left: 931px; top: 0;
  width: 1011px; padding: 22px 40px 44px 40px;
  display: flex; flex-direction: column;
  background: #fcfcfc; border: 3px solid #cdd2d3; border-top-width: 2px;
}
.popup-grip { display: flex; justify-content: center; gap: 9px; height: 8px; margin-bottom: 89px; }
.popup-grip i { width: 8px; height: 8px; background: #aaa; border-radius: 2px; }
.popup-label { margin-bottom: 24px; }
.popup-row { display: flex; align-items: center; gap: 6px; }
.collector { flex: 1; min-width: 0; height: 72px; padding: 0 0 4px 20px; color: #333; background: #eafcdd; border: 2px solid #adb4b5; box-shadow: inset 0 0 0 3px #fff; }
.edit-btn { width: 379px; height: 82px; padding-bottom: 4px; background: #f8f8f8; border: 3px solid #a9abac; }

/* model tree panel */
.workspace { display: flex; flex: 1; }
.sidebar { width: 927px; flex: none; background: #f8fafc; border-right: 8px solid #dae0e0; }
.side-tabs { display: flex; height: 87px; background: #dae0e0; }
.side-tab { width: 105px; }
.side-tab--on { width: 108px; background: #f8fafc; }
.side-tools { display: flex; height: 84px; margin-top: 14px; padding-left: 20px; align-items: stretch; }
.grip { width: 12px; height: 56px; align-self: center; }
.q--after-grip { margin-left: 52px; }
.rule { width: 2px; margin: 0 14px; background: #b0b4b5; }
.q--more { margin-left: 20px; }
.filter { display: flex; align-items: center; height: 93px; margin-top: 13px; padding-left: 38px; }
.filter-box { display: flex; align-items: center; width: 654px; height: 93px; margin: 0 8px 0 11px; padding-right: 17px; background: #fff; border: 3px solid #a9b5b7; }
.filter-input { flex: 1; height: 80px; min-width: 0; outline: 0; }
.q--add { margin-left: 5px; }

.tree { list-style: none; margin: 17px 0 0; padding: 0 0 0 36px; }
.node { display: flex; align-items: center; height: 66px; padding-bottom: 2px; white-space: nowrap; }
.node .i-54 { margin-right: 18px; }
.node--child { padding-left: 138px; }
.latin { padding-bottom: 0; font-family: "Open Sans", "Noto Sans", sans-serif; font-size: 40px; font-weight: 300; }
.twist { width: 69px; flex: none; }
.twist::before { content: ""; display: block; width: 0; height: 0; border: 15px solid transparent; }
.twist--closed::before { margin-left: 19px; border-left: 23px solid #8f9091; border-right: 0; }
.twist--open::before { margin-left: 12px; border-top: 24px solid #8f9091; border-bottom: 0; }
.star { width: 26px; height: 26px; margin: -20px 8px 0 -2px; }
.insert { display: flex; align-items: center; height: 50px; padding-right: 15px; }
.insert-bar { flex: 1; height: 24px; border: solid #5bc83a; border-width: 0 4px; background: linear-gradient(#5bc83a, #5bc83a) center / 100% 5px no-repeat; }

/* graphics area */
.stage { position: relative; flex: 1; min-width: 0; background: #e8e9ed; }
.model { width: 100%; height: auto; }
.cad-text { font-family: "Liberation Sans", Arial, sans-serif; font-size: 58px; font-weight: 400; }
.viewbar { position: absolute; right: 28px; top: 19px; display: flex; height: 104px; padding: 0 6px; background: #f8f9fb; border: 2px solid #9fa3a4; }
.v { position: relative; width: 88px; }
.v--menu::after { right: 4px; bottom: 13px; border-width: 5px; }
.v--on { margin: 10px 4px; width: 80px; background: #dfe0e1; border: 2px solid #aaadae; }
```
